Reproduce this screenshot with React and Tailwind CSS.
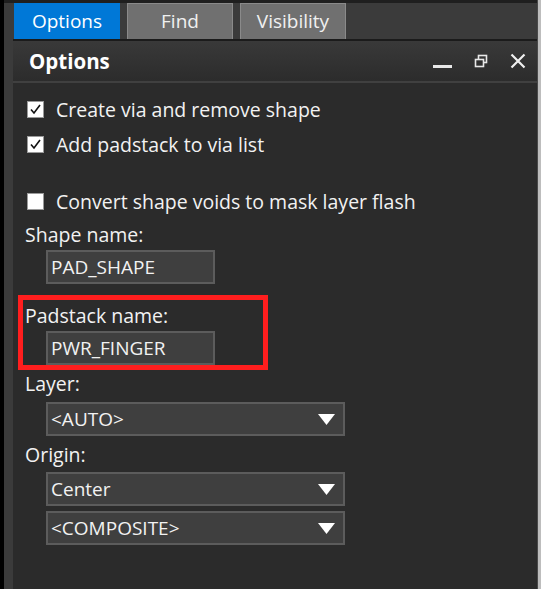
import React from "react";

const font = { fontFamily: '"Open Sans", "Noto Sans", sans-serif' };

function Check({ checked }) {
  return (
    <div className="w-[17px] h-[17px] bg-white border border-[#9a9a9a] flex items-center justify-center shrink-0">
      {checked && (
        <svg width="13" height="13" viewBox="0 0 13 13">
          <path d="M2 6.5 L5 10 L11 2" fill="none" stroke="#111" strokeWidth="1.6" />
        </svg>
      )}
    </div>
  );
}

function CheckRow({ checked, label, className = "" }) {
  return (
    <div className={"flex items-center h-[35px] pl-[14px] gap-[12px] " + className}>
      <Check checked={checked} />
      <span className="text-[19.5px] text-[#f2f2f2] leading-none">{label}</span>
    </div>
  );
}

function Label({ children, inner, className = "" }) {
  return (
    <div className={"h-[26px] flex items-center text-[19.5px] text-[#f2f2f2] leading-none " + (inner ? "pl-[2px] " : "pl-[12px] ") + className}>
      {children}
    </div>
  );
}

function TextBox({ value, inner, className = "" }) {
  return (
    <div className={"w-[169px] h-[34px] bg-[#3f3f3f] border-2 border-[#5c5c5c] flex items-center pl-[3px] text-[19px] text-[#f2f2f2] leading-none " + (inner ? "ml-[23px] " : "ml-[33px] ") + className}>
      {value}
    </div>
  );
}

function Select({ value, className = "" }) {
  return (
    <div className={"ml-[33px] w-[299px] h-[34px] bg-[#3f3f3f] border-2 border-[#5c5c5c] flex items-center justify-between pl-[3px] pr-[8px] text-[19px] text-[#f2f2f2] leading-none " + className}>
      <span>{value}</span>
      <svg width="17" height="11" viewBox="0 0 17 11">
        <path d="M0 0 H17 L8.5 11 Z" fill="#ffffff" />
      </svg>
    </div>
  );
}

export default function App() {
  return (
    <div className="w-[541px] h-[589px] flex bg-black overflow-hidden" style={font}>
      <div className="w-[4px] bg-black" />
      <div className="w-[9px] flex flex-col">
        <div className="h-[3px] bg-[#1f1f1f]" />
        <div className="flex-1 bg-[#3b3b3b]" />
      </div>
      <div className="flex-1 flex flex-col">
        {/* tab row */}
        <div className="h-[3px] bg-[#1f1f1f]" />
        <div className="h-[36px] bg-[#3b3b3b] flex items-stretch pl-[1px] gap-[7px]">
          <div className="w-[106px] bg-[#0078d7] text-white text-[19px] flex items-center justify-center leading-none">Options</div>
          <div className="w-[106px] bg-[#707070] border border-[#8a8a8a] border-b-0 text-[#f0f0f0] text-[19px] flex items-center justify-center leading-none">Find</div>
          <div className="w-[106px] bg-[#707070] border border-[#8a8a8a] border-b-0 text-[#f0f0f0] text-[19px] flex items-center justify-center leading-none">Visibility</div>
        </div>
        <div className="h-[2px] bg-[#1b1b1b]" />
        {/* header */}
        <div className="h-[40px] bg-gradient-to-b from-[#393939] to-[#2c2c2c] flex items-center pl-[16px] pr-[11px]">
          <span className="text-[20.5px] font-bold text-white leading-none">Options</span>
          <div className="ml-auto flex items-center gap-[22px]">
            <svg width="19" height="14" viewBox="0 0 19 14">
              <rect x="0" y="11" width="19" height="3" fill="#e8e8e8" />
            </svg>
            <svg width="14" height="14" viewBox="0 0 14 14">
              <rect x="4.5" y="1.5" width="8" height="7" fill="none" stroke="#e8e8e8" strokeWidth="1.6" />
              <rect x="1.5" y="5.5" width="8" height="7" fill="#2f2f2f" stroke="#e8e8e8" strokeWidth="1.6" />
            </svg>
            <svg width="16" height="16" viewBox="0 0 16 16">
              <path d="M1.5 1.5 L14.5 14.5 M14.5 1.5 L1.5 14.5" stroke="#f0f0f0" strokeWidth="2.2" />
            </svg>
          </div>
        </div>
        <div className="h-[2px] bg-[#404040]" />
        {/* content */}
        <div className="flex-1 bg-[#2b2b2b] flex flex-col pt-[9px]">
          <CheckRow checked label="Create via and remove shape" />
          <CheckRow checked label="Add padstack to via list" />
          <CheckRow label="Convert shape voids to mask layer flash" className="mt-[22px]" />
          <Label className="mt-[3px]">Shape name:</Label>
          <TextBox value="PAD_SHAPE" className="mt-[2px]" />
          <div className="mt-[11px] ml-[5px] w-[250px] border-[5px] border-[#ff1e1e] pt-[3px] flex flex-col">
            <Label inner>Padstack name:</Label>
            <TextBox inner value="PWR_FINGER" className="mt-[2px]" />
          </div>
          <Label className="mt-[1px]">Layer:</Label>
          <Select value="<AUTO>" className="mt-[5px]" />
          <Label className="mt-[6px]">Origin:</Label>
          <Select value="Center" className="mt-[4px]" />
          <Select value="<COMPOSITE>" className="mt-[5px]" />
        </div>
      </div>
      <div className="w-[1px] bg-[#4a4a4a]" />
      <div className="w-[3px] bg-[#bdbdbd]" />
    </div>
  );
}
